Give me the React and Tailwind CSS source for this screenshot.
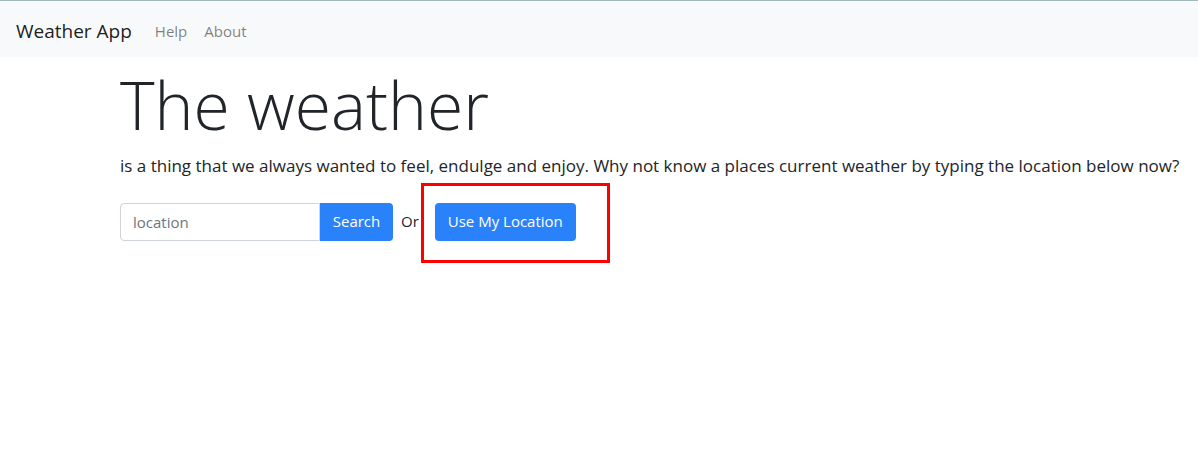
import React from 'react';

const App = () => {
  return (
    <div className="min-h-[453px] bg-white text-[#212529] font-['Open_Sans',sans-serif] border-t border-[#a3b8b8]">
      <nav className="h-[56px] bg-[#f8f9fa] flex items-center px-4 pt-[4px]">
        <span className="text-[19px] text-black/90 mr-[23px]">Weather App</span>
        <a className="text-[15px] text-black/50 mr-[17px]">Help</a>
        <a className="text-[15px] text-black/50">About</a>
      </nav>
      <main className="pl-[120px]">
        <h1 className="text-[66px] font-light leading-[1.2] mt-[8px]">The weather</h1>
        <p className="text-[17px] leading-[1.5] mt-[9px] whitespace-nowrap">
          is a thing that we always wanted to feel, endulge and enjoy. Why not know a places current weather by typing the location below now?
        </p>
        <div className="flex items-center mt-[24px]">
          <input
            placeholder="location"
            className="w-[200px] h-[38px] px-3 text-[15px] border border-[#ced4da] rounded-l-[4px] placeholder:text-[#6c757d] outline-none"
          />
          <button className="h-[38px] w-[73px] bg-[#2a82fb] text-white text-[15px] rounded-r-[4px]">Search</button>
          <span className="ml-2 text-[15px]">Or</span>
          <div className="relative ml-[16px]">
            <div className="absolute left-[-14px] top-[-20px] w-[189px] h-[80px] border-[3px] border-[#ff0000]" />
            <button className="h-[38px] w-[141px] bg-[#2a82fb] text-white text-[15px] rounded-[4px]">Use My Location</button>
          </div>
        </div>
      </main>
    </div>
  );
};

export default App;
